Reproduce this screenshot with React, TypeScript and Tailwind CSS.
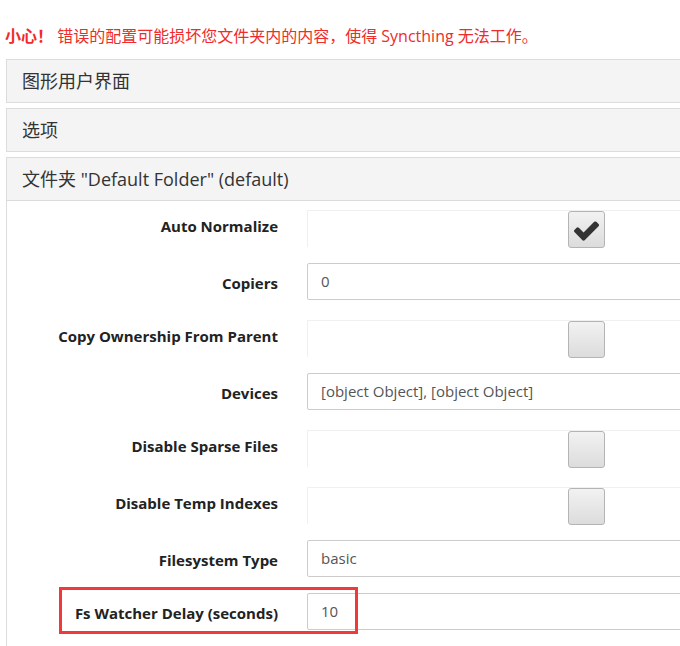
import React from 'react';

type Row = { label: string; kind: 'check' | 'input'; value?: string; checked?: boolean; marked?: boolean };

const rows: Row[] = [
    { label: 'Auto Normalize', kind: 'check', checked: true },
    { label: 'Copiers', kind: 'input', value: '0' },
    { label: 'Copy Ownership From Parent', kind: 'check' },
    { label: 'Devices', kind: 'input', value: '[object Object], [object Object]' },
    { label: 'Disable Sparse Files', kind: 'check' },
    { label: 'Disable Temp Indexes', kind: 'check' },
    { label: 'Filesystem Type', kind: 'input', value: 'basic' },
    { label: 'Fs Watcher Delay (seconds)', kind: 'input', value: '10', marked: true },
];

const CheckBox = ({ checked }: { checked?: boolean }) => (
    <div className="w-[37px] h-[37px] rounded-[3px] border border-[#b4b4b4] bg-gradient-to-b from-[#f2f2f2] to-[#dcdcdc] flex items-center justify-center">
        {checked && (
            <svg width="29" height="29" viewBox="0 0 1792 1792" className="mt-[1px]">
                <path
                    fill="#333"
                    d="M1671 566q0 40-28 68l-724 724-136 136q-28 28-68 28t-68-28l-136-136-362-362q-28-28-28-68t28-68l136-136q28-28 68-28t68 28l294 295 656-657q28-28 68-28t68 28l136 136q28 28 28 68z"
                />
            </svg>
        )}
    </div>
);

const Panel = ({ title }: { title: string }) => (
    <div className="h-[44px] border border-[#dcdcdc] bg-[#f4f4f4] flex items-center pl-[15px] text-[18px] text-[#333]">
        {title}
    </div>
);

export default function App() {
    return (
        <div className="w-[680px] h-[646px] overflow-hidden bg-white" style={{ fontFamily: '"Open Sans", "Noto Sans CJK SC", sans-serif' }}>
            <div className="w-[900px] pl-[6px]">
                <p className="pt-[25px] h-[59px] text-[16px] leading-[22px] text-[#f02b2b] -ml-[1px]">
                    <span className="font-bold">小心！</span> 错误的配置可能损坏您文件夹内的内容，使得 Syncthing 无法工作。
                </p>

                <div className="flex flex-col gap-[5px]">
                    <Panel title="图形用户界面" />
                    <Panel title="选项" />
                    <div className="border border-[#dcdcdc]">
                        <div className="h-[43px] bg-[#f4f4f4] border-b border-[#dcdcdc] flex items-center pl-[15px] text-[18px] text-[#333]">
                            文件夹 "Default Folder" (default)
                        </div>
                        <div className="pt-[9px] pb-[20px]">
                            {rows.map((r, i) => (
                                <div
                                    key={r.label}
                                    className={`relative flex items-center ${i === 0 ? '' : r.kind === 'check' ? 'mt-[20px]' : 'mt-[16px]'}`}
                                >
                                    <div
                                        className={`w-[271px] shrink-0 text-right text-[15px] leading-5 font-bold text-[#222] ${r.kind === 'check' ? '-mt-[5px]' : 'mt-[2px]'}`}
                                    >
                                        {r.label}
                                    </div>
                                    <div className="ml-[29px] flex-1">
                                        {r.kind === 'check' ? (
                                            <div className="h-[37px] border-t border-l border-[#f0f0f0] pl-[260px]">
                                                <CheckBox checked={r.checked} />
                                            </div>
                                        ) : (
                                            <div className="h-[37px] border border-[#cccccc] rounded-[2px] flex items-center pl-[13px] text-[15px] text-[#555]">
                                                {r.value}
                                            </div>
                                        )}
                                    </div>
                                    {r.marked && (
                                        <div className="absolute left-[52px] top-[-6px] w-[299px] h-[47px] border-[3px] border-[#f03a3a]" />
                                    )}
                                </div>
                            ))}
                        </div>
                    </div>
                </div>
            </div>
        </div>
    );
}
